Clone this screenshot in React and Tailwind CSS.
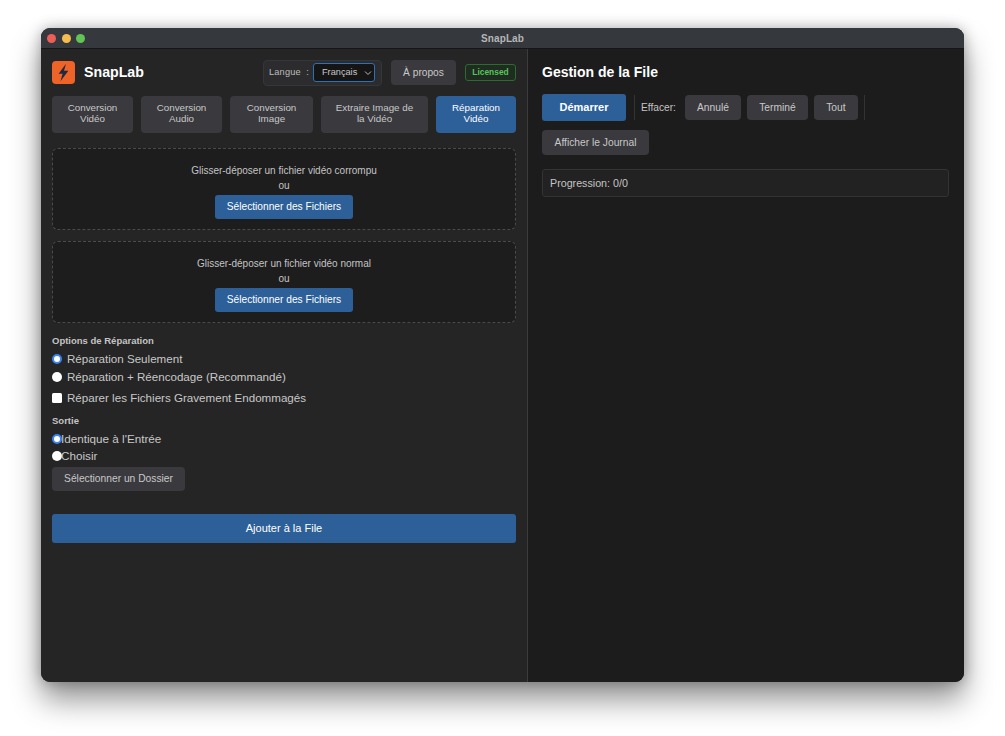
import React from "react";

function Tab({ children, active, w }) {
  return (
    <button className={`${w} h-[37px] pb-[3px] rounded-[4px] text-[9.8px] leading-[11px] text-center ${active ? "bg-[#2d6099] text-white" : "bg-[#3a3a3e] text-[#c8c8c8]"}`}>
      {children}
    </button>
  );
}

function Drop({ label }) {
  return (
    <div className="h-[82px] rounded-[6px] border border-dashed border-[#4a4a4a] bg-[#1d1d1d] flex flex-col items-center pt-[15px]">
      <p className="text-[10px] leading-[14px] text-[#c4c4c4]">{label}</p>
      <p className="text-[10px] leading-[14px] mt-[1px] text-[#c4c4c4]">ou</p>
      <button className="mt-[2px] w-[138px] h-[24px] rounded-[3px] bg-[#2d6099] text-white text-[10.2px]">Sélectionner des Fichiers</button>
    </div>
  );
}

function Radio({ checked, className = "" }) {
  return (
    <input
      type="radio"
      readOnly
      checked={!!checked}
      className={`appearance-none block shrink-0 w-[10px] h-[10px] rounded-full bg-white ${checked ? "border-[2.5px] border-[#3b82f6]" : ""} ${className}`}
    />
  );
}

function Gray({ children, className = "" }) {
  return <button className={`rounded-[4px] bg-[#3a3a3e] text-[#c8c8c8] text-[10.25px] ${className}`}>{children}</button>;
}

export default function App() {
  return (
    <div className="w-[1005px] h-[736px] bg-white pt-[28px] pl-[41px] overflow-hidden font-['Liberation_Sans',Arial,sans-serif]">
      <div className="w-[923px] h-[654px] rounded-[9px] overflow-hidden flex flex-col bg-[#252525] shadow-[0_18px_30px_rgba(0,0,0,0.42),0_0_14px_rgba(0,0,0,0.28)]">
        <div className="relative h-[21px] shrink-0 bg-[#35383c] border-b border-[#161616] flex items-center pl-[6px] gap-[5.5px]">
          <span className="w-[9px] h-[9px] rounded-full bg-[#ec5f57]" />
          <span className="w-[9px] h-[9px] rounded-full bg-[#f5bd4f]" />
          <span className="w-[9px] h-[9px] rounded-full bg-[#61c454]" />
          <span className="absolute inset-0 flex items-center justify-center text-[10px] font-bold tracking-[0.1px] text-[#b4b6b8]">SnapLab</span>
        </div>
        <div className="flex flex-1 min-h-0">
          <div className="w-[487px] shrink-0 bg-[#252525] border-r border-[#3c3c3c] px-[11px] pt-[10px]">
            <div className="h-[27px] flex items-center">
              <div className="w-[23px] h-[23px] rounded-[4px] bg-[#ee6327] flex items-center justify-center">
                <svg width="15" height="19" viewBox="0 0 15 19">
                  <path d="M10 0.8 L2.6 10.8 L6.6 10.8 L4.4 18.2 L12.4 7.8 L8 7.8 Z" fill="#1d2a3f" />
                </svg>
              </div>
              <span className="ml-[9px] text-[14.2px] font-bold text-white">SnapLab</span>
              <div className="ml-auto w-[119px] h-[26px] rounded-[4px] border border-[#34363a] bg-[#2c2c2e] flex items-center pl-[5px] text-[9.2px] text-[#bdbdbd]">
                <span className="whitespace-pre tracking-[0.2px]">Langue  :</span>
                <div className="ml-auto mr-[6px] w-[62px] h-[19px] rounded-[3px] border border-[#2f6fb5] bg-[#151515] flex items-center pl-[8px] text-[9.2px] text-[#c8c8c8]">
                  <span>Français</span>
                  <svg className="ml-auto mr-[2px]" width="8" height="6" viewBox="0 0 8 6" fill="none" stroke="#b8b8b8" strokeWidth="1"><path d="M1 1.5 L4 4.5 L7 1.5" /></svg>
                </div>
              </div>
              <Gray className="ml-[9px] w-[65px] h-[25px] !text-[10.2px]">À propos</Gray>
              <span className="ml-[9px] w-[51px] h-[17px] rounded-[3px] border border-[#2f6a33] bg-[#1f2c20] flex items-center justify-center text-[8.4px] font-bold text-[#58c45e]">Licensed</span>
            </div>
            <div className="mt-[10px] flex gap-[8px]">
              <Tab w="w-[81px]">Conversion<br />Vidéo</Tab>
              <Tab w="w-[81px]">Conversion<br />Audio</Tab>
              <Tab w="w-[83px]">Conversion<br />Image</Tab>
              <Tab w="w-[107px]">Extraire Image de<br />la Vidéo</Tab>
              <Tab w="w-[80px]" active>Réparation<br />Vidéo</Tab>
            </div>
            <div className="mt-[15px] flex flex-col gap-[11px]">
              <Drop label="Glisser-déposer un fichier vidéo corrompu" />
              <Drop label="Glisser-déposer un fichier vidéo normal" />
            </div>
            <div className="mt-[12px] text-[9.5px] leading-[12px] font-bold text-[#c4c4c4]">Options de Réparation</div>
            <label className="mt-[3px] h-[18px] flex items-center gap-[5px] text-[11.6px] text-[#c8c8c8]"><Radio checked />Réparation Seulement</label>
            <label className="h-[18px] flex items-center gap-[5px] text-[11.6px] text-[#c8c8c8]"><Radio />Réparation + Réencodage (Recommandé)</label>
            <label className="mt-[3px] h-[18px] flex items-center gap-[5px] text-[11.6px] text-[#c8c8c8]">
              <input type="checkbox" readOnly className="appearance-none block w-[10px] h-[10px] rounded-[1.5px] bg-white" />
              Réparer les Fichiers Gravement Endommagés
            </label>
            <div className="mt-[8px] text-[9.5px] leading-[12px] font-bold text-[#c4c4c4]">Sortie</div>
            <label className="mt-[3px] h-[18px] flex items-center text-[11.7px] text-[#c8c8c8]"><Radio checked className="mr-[-1px]" />Identique à l'Entrée</label>
            <label className="h-[16px] flex items-center text-[11.7px] text-[#c8c8c8]"><Radio className="mr-[-1px]" />Choisir</label>
            <Gray className="mt-[3px] block w-[133px] h-[24px]">Sélectionner un Dossier</Gray>
            <button className="mt-[23px] w-full h-[29px] rounded-[3px] bg-[#2d6099] text-white text-[11px]">Ajouter à la File</button>
          </div>
          <div className="flex-1 bg-[#1c1c1c] pl-[14px] pr-[15px] pt-[13px]">
            <h2 className="text-[14px] leading-[20px] font-bold text-white">Gestion de la File</h2>
            <div className="mt-[12px] flex items-center h-[27px]">
              <button className="w-[84px] h-[27px] rounded-[3px] bg-[#2d6099] text-white text-[11px] font-bold">Démarrer</button>
              <span className="ml-[8px] w-px h-[25px] bg-[#333]" />
              <span className="ml-[6px] text-[10.2px] text-[#c4c4c4]">Effacer:</span>
              <Gray className="ml-[9px] w-[56px] h-[25px]">Annulé</Gray>
              <Gray className="ml-[6px] w-[61px] h-[25px]">Terminé</Gray>
              <Gray className="ml-[6px] w-[44px] h-[25px]">Tout</Gray>
              <span className="ml-[6px] w-px h-[25px] bg-[#333]" />
            </div>
            <Gray className="mt-[9px] block w-[107px] h-[25px]">Afficher le Journal</Gray>
            <div className="mt-[14px] h-[28px] rounded-[3px] border border-[#333] bg-[#222] flex items-center pl-[7px] pt-px text-[10.7px] text-[#c4c4c4]">Progression: 0/0</div>
          </div>
        </div>
      </div>
    </div>
  );
}
